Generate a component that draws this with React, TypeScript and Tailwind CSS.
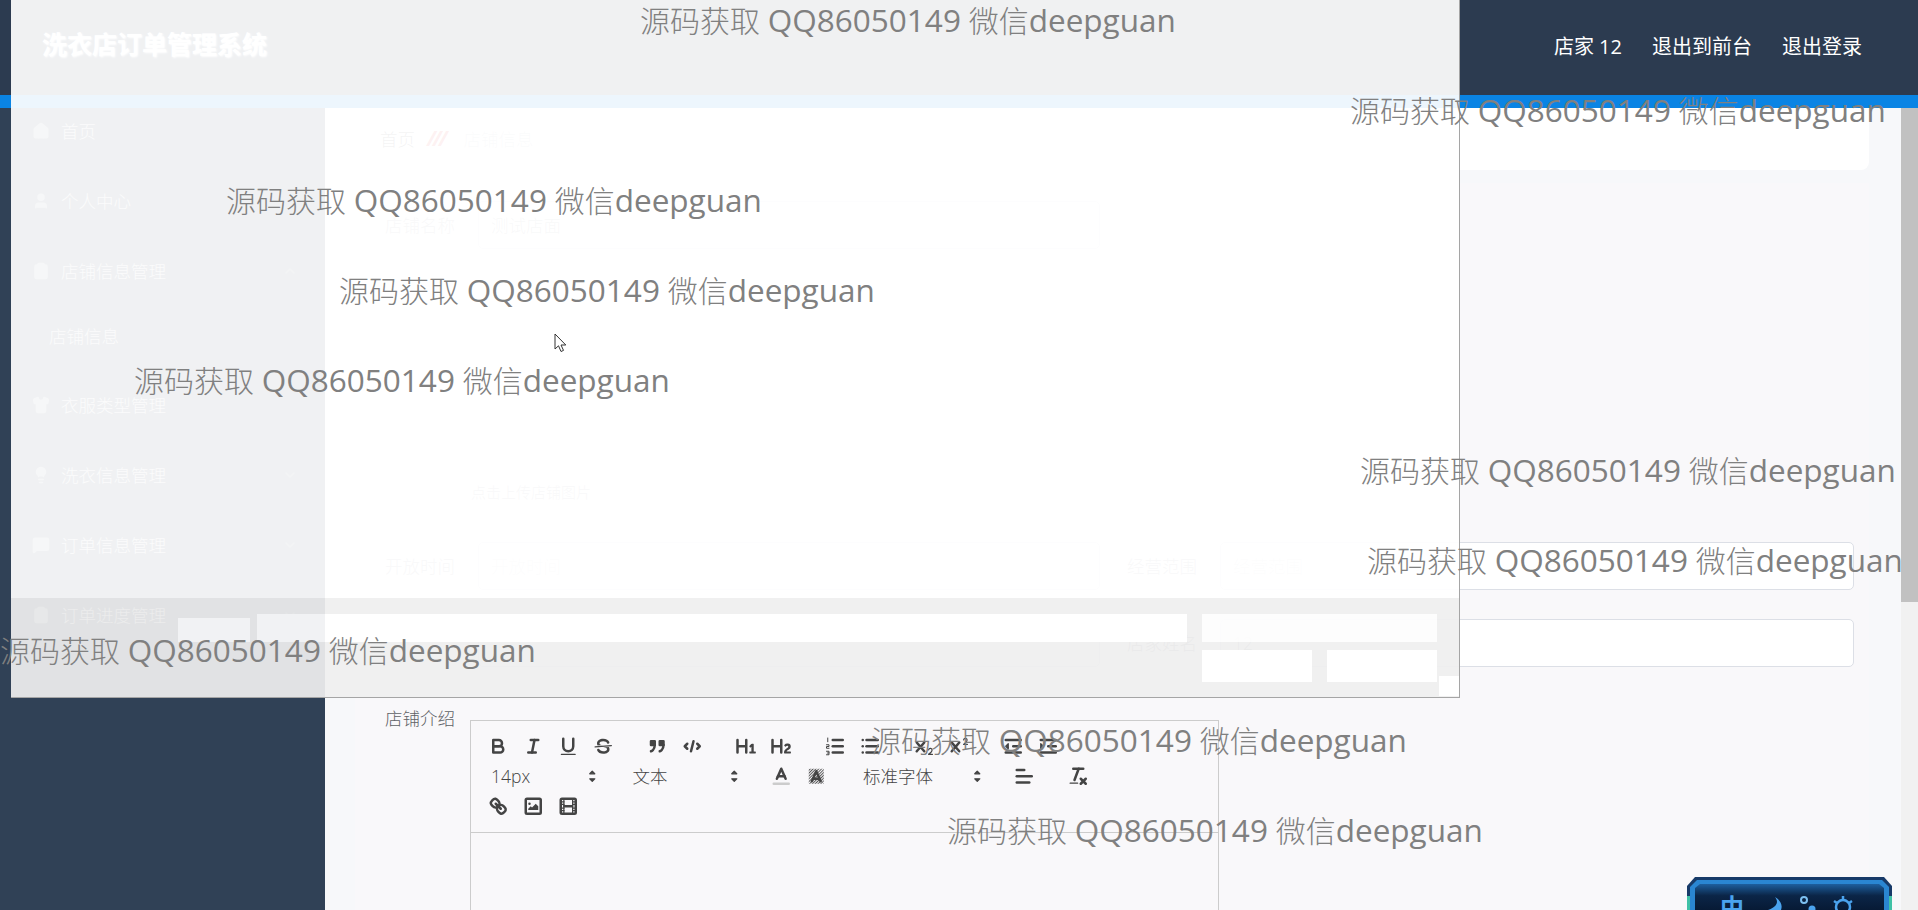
import { useId, type ReactNode } from 'react';
import { ChevronDown, ChevronUp, Clipboard, ClipboardList, House, Lightbulb, MessageSquare, Shirt, User } from 'lucide-react';

const watermarks = [
  'left-[640px] top-0',
  'left-[1350px] top-[90px]',
  'left-[226px] top-[180px]',
  'left-[339px] top-[270px]',
  'left-[134px] top-[360px]',
  'left-[1360px] top-[450px]',
  'left-[1367px] top-[540px]',
  'left-0 top-[630px]',
  'left-[871px] top-[720px]',
  'left-[947px] top-[810px]',
];

// bright gaps in the grey band at the foot of the overlay
const bandHoles = [
  'left-[167px] top-[20px] w-[72px] h-[24px] bg-[#f1f2f4]',
  'left-[246px] top-[16px] w-[68px] h-[28px] bg-[#f1f2f4]',
  'left-[314px] top-[16px] w-[862px] h-[28px] bg-white',
  'left-[1191px] top-[16px] w-[235px] h-[28px] bg-white/85',
  'left-[1191px] top-[52px] w-[110px] h-[32px] bg-white',
  'left-[1316px] top-[52px] w-[110px] h-[32px] bg-white',
  'left-[1428px] top-[78px] w-[20px] h-[20px] bg-white',
];

function Menu({ icon: Icon, label, arrow }: { icon: typeof House; label: string; arrow?: 'up' | 'down' }) {
  return (
    <div className="flex h-[46px] items-center pl-[32px] pr-[27px] text-[17.5px] font-light text-white/70">
      <Icon className="h-[18px] w-[18px] fill-white stroke-white opacity-40" />
      <span className="ml-[11px] flex-1">{label}</span>
      {arrow === 'up' && <ChevronUp className="h-4 w-4 opacity-30" />}
      {arrow === 'down' && <ChevronDown className="h-4 w-4 opacity-30" />}
    </div>
  );
}

function Qicon({ children }: { children: ReactNode }) {
  return (
    <button className="flex h-[30px] w-[35px] items-center justify-center">
      <svg
        viewBox="0 0 18 18"
        className="h-[22.5px] w-[22.5px] fill-none stroke-[#444] stroke-2"
        strokeLinecap="round"
        strokeLinejoin="round"
      >
        {children}
      </svg>
    </button>
  );
}

function Picker({ label, width }: { label: string; width: string }) {
  return (
    <div className={`flex h-[30px] items-center justify-between pl-[10px] ${width}`}>
      <span className="text-[17.5px] font-light text-[#444]">{label}</span>
      <svg viewBox="0 0 18 18" className="h-[22.5px] w-[22.5px] fill-[#444] stroke-[#444]" strokeLinejoin="round">
        <polygon points="7 11 9 13 11 11 7 11" />
        <polygon points="7 7 9 5 11 7 7 7" />
      </svg>
    </div>
  );
}

const F = 'fill-[#444] stroke-none';

function Toolbar() {
  const hatch = useId();
  return (
    <div className="h-[112px] border-b border-[#ccc] pl-[10px] pt-[10px]">
      <div className="flex h-[30px]">
        <div className="mr-[19px] flex">
          <Qicon>
            <path d="M5,4H9.5A2.5,2.5,0,0,1,12,6.5v0A2.5,2.5,0,0,1,9.5,9H5V4Z" />
            <path d="M5,9h5.5A2.5,2.5,0,0,1,13,11.5v0A2.5,2.5,0,0,1,10.5,14H5V9Z" />
          </Qicon>
          <Qicon>
            <line x1="7" x2="13" y1="4" y2="4" />
            <line x1="5" x2="11" y1="14" y2="14" />
            <line x1="8" x2="10" y1="14" y2="4" />
          </Qicon>
          <Qicon>
            <path d="M5,3V9a4.012,4.012,0,0,0,4,4H9a4.012,4.012,0,0,0,4-4V3" />
            <rect className={F} x="3" y="15" width="12" height="1" rx="0.5" />
          </Qicon>
          <Qicon>
            <line className="stroke-1" x1="15.5" x2="2.5" y1="8.5" y2="9.5" />
            <path className={F} d="M9.007,8C6.542,7.791,6,7.519,6,6.5,6,5.792,7.283,5,9,5c1.571,0,2.765.679,2.969,1.309a1,1,0,0,0,1.9-.617C13.356,4.106,11.354,3,9,3,6.2,3,4,4.538,4,6.5a3.2,3.2,0,0,0,.5,1.843Z" />
            <path className={F} d="M8.984,10C11.457,10.208,12,10.479,12,11.5c0,0.708-1.283,1.5-3,1.5-1.571,0-2.765-.679-2.969-1.309a1,1,0,1,0-1.9.617C4.644,13.894,6.646,15,9,15c2.8,0,5-1.538,5-3.5a3.2,3.2,0,0,0-.5-1.843Z" />
          </Qicon>
        </div>
        <div className="mr-[19px] flex">
          <Qicon>
            <rect className="fill-[#444]" x="4" y="5" width="3" height="3" />
            <rect className="fill-[#444]" x="11" y="5" width="3" height="3" />
            <path d="M7,8c0,4.031-3,5-3,5" />
            <path d="M14,8c0,4.031-3,5-3,5" />
          </Qicon>
          <Qicon>
            <polyline points="5 7 3 9 5 11" />
            <polyline points="13 7 15 9 13 11" />
            <line x1="10" x2="8" y1="5" y2="13" />
          </Qicon>
        </div>
        <div className="mr-[19px] flex">
          <Qicon>
            <path className={F} d="M10,4V14a1,1,0,0,1-2,0V10H3v4a1,1,0,0,1-2,0V4A1,1,0,0,1,3,4V8H8V4a1,1,0,0,1,2,0Zm6.06787,9.209H14.98975V7.59863a.54085.54085,0,0,0-.605-.60547h-.62744a1.01119,1.01119,0,0,0-.748.29688L11.645,8.56641a.5435.5435,0,0,0-.022.8584l.28613.30762a.53861.53861,0,0,0,.84717.0332l.09912-.08789a1.2137,1.2137,0,0,0,.2417-.35254h.02246s-.01123.30859-.01123.60547V13.209H12.041a.54085.54085,0,0,0-.605.60547v.43945a.54085.54085,0,0,0,.605.60547h4.02686a.54085.54085,0,0,0,.605-.60547v-.43945A.54085.54085,0,0,0,16.06787,13.209Z" />
          </Qicon>
          <Qicon>
            <path className={F} d="M16.73975,13.81445v.43945a.54085.54085,0,0,1-.605.60547H11.855a.58392.58392,0,0,1-.64893-.60547V14.0127c0-2.90527,3.39941-3.42187,3.39941-4.55469a.77675.77675,0,0,0-.84717-.78125,1.17684,1.17684,0,0,0-.83594.38477c-.2749.26367-.561.374-.85791.13184l-.4292-.34082c-.30811-.24219-.38525-.51758-.1543-.81445a2.97155,2.97155,0,0,1,2.45361-1.17676,2.45393,2.45393,0,0,1,2.68408,2.40918c0,2.45312-3.1792,2.92676-3.27832,3.93848h2.79443A.54085.54085,0,0,1,16.73975,13.81445ZM9,3A.99974.99974,0,0,0,8,4V8H3V4A1,1,0,0,0,1,4V14a1,1,0,0,0,2,0V10H8v4a1,1,0,0,0,2,0V4A.99974.99974,0,0,0,9,3Z" />
          </Qicon>
        </div>
        <div className="mr-[19px] flex">
          <Qicon>
            <line x1="7" x2="15" y1="4" y2="4" />
            <line x1="7" x2="15" y1="9" y2="9" />
            <line x1="7" x2="15" y1="14" y2="14" />
            <path className="stroke-[0.8]" d="M3,2.4 V5.4 M2,7.8 H4 V9.2 H2 V10.6 H4 M2,13 H4 V14.4 H2.6 M4,14.4 V15.8 H2" />
          </Qicon>
          <Qicon>
            <line x1="6" x2="15" y1="4" y2="4" />
            <line x1="6" x2="15" y1="9" y2="9" />
            <line x1="6" x2="15" y1="14" y2="14" />
            <line x1="3" x2="3" y1="4" y2="4" />
            <line x1="3" x2="3" y1="9" y2="9" />
            <line x1="3" x2="3" y1="14" y2="14" />
          </Qicon>
        </div>
        <div className="mr-[19px] flex">
          <Qicon>
            <path className={F} d="M15.5,15H13.861a3.858,3.858,0,0,0,1.914-2.975,1.8,1.8,0,0,0-1.6-1.751A1.921,1.921,0,0,0,12.021,11.7a0.50013,0.50013,0,1,0,.957.291h0a0.914,0.914,0,0,1,1.053-.725,0.81,0.81,0,0,1,.744.762c0,1.076-1.16971,1.86982-1.93971,2.43082A1.45639,1.45639,0,0,0,12,15.5a0.5,0.5,0,0,0,.5.5h3A0.5,0.5,0,0,0,15.5,15Z" />
            <path className={F} d="M9.65,5.241a1,1,0,0,0-1.409.108L6,7.964,3.759,5.349A1,1,0,0,0,2.192,6.59178Q2.21541,6.6213,2.241,6.649L4.684,9.5,2.241,12.35A1,1,0,0,0,3.71,13.70722q0.02557-.02768.049-0.05722L6,11.036,8.241,13.65a1,1,0,1,0,1.567-1.24277Q9.78459,12.3777,9.759,12.35L7.316,9.5,9.759,6.651A1,1,0,0,0,9.65,5.241Z" />
          </Qicon>
          <Qicon>
            <path className={F} d="M15.5,7H13.861a4.015,4.015,0,0,0,1.914-2.975,1.8,1.8,0,0,0-1.6-1.751A1.922,1.922,0,0,0,12.021,3.7a0.5,0.5,0,1,0,.957.291,0.917,0.917,0,0,1,1.053-.725,0.81,0.81,0,0,1,.744.762c0,1.077-1.164,1.925-1.934,2.486A1.423,1.423,0,0,0,12,7.5a0.5,0.5,0,0,0,.5.5h3A0.5,0.5,0,0,0,15.5,7Z" />
            <path className={F} d="M9.651,5.241a1,1,0,0,0-1.41.108L6,7.964,3.759,5.349a1,1,0,1,0-1.519,1.3L4.683,9.5,2.241,12.35a1,1,0,1,0,1.519,1.3L6,11.036,8.241,13.65a1,1,0,0,0,1.519-1.3L7.317,9.5,9.759,6.651A1,1,0,0,0,9.651,5.241Z" />
          </Qicon>
        </div>
        <div className="flex">
          <Qicon>
            <line x1="3" x2="15" y1="14" y2="14" />
            <line x1="3" x2="15" y1="4" y2="4" />
            <line x1="9" x2="15" y1="9" y2="9" />
            <polygon className="fill-[#444] stroke-1" points="5 7 5 11 3 9 5 7" />
          </Qicon>
          <Qicon>
            <line x1="3" x2="15" y1="14" y2="14" />
            <line x1="3" x2="15" y1="4" y2="4" />
            <line x1="9" x2="15" y1="9" y2="9" />
            <polygon className="fill-[#444] stroke-1" points="3 7 3 11 5 9 3 7" />
          </Qicon>
        </div>
      </div>
      <div className="flex h-[30px]">
        <Picker label="14px" width="mr-[19px] w-[122.5px]" />
        <Picker label="文本" width="mr-[19px] w-[122.5px]" />
        <div className="mr-[19px] flex">
          <Qicon>
            <line className="stroke-[#ccc]" x1="3" x2="15" y1="15" y2="15" />
            <polyline points="5.5 11 9 3 12.5 11" />
            <line x1="11.63" x2="6.38" y1="9" y2="9" />
          </Qicon>
          <Qicon>
            <defs>
              <pattern id={hatch} width="1.6" height="1.6" patternUnits="userSpaceOnUse" patternTransform="rotate(45)">
                <rect x="0" y="0" width="0.7" height="1.6" fill="#444" stroke="none" />
              </pattern>
            </defs>
            <rect className="stroke-none" x="3" y="3" width="12" height="12" fill={`url(#${hatch})`} />
            <polyline points="5.5 13 9 5 12.5 13" />
            <line x1="11.63" x2="6.38" y1="11" y2="11" />
          </Qicon>
        </div>
        <Picker label="标准字体" width="mr-[19px] w-[135px]" />
        <div className="mr-[19px] flex">
          <Qicon>
            <line x1="3" x2="15" y1="9" y2="9" />
            <line x1="3" x2="13" y1="14" y2="14" />
            <line x1="3" x2="9" y1="4" y2="4" />
          </Qicon>
        </div>
        <Qicon>
          <line x1="5" x2="13" y1="3" y2="3" />
          <line x1="6" x2="9.35" y1="12" y2="3" />
          <line x1="11" x2="15" y1="11" y2="15" />
          <line x1="15" x2="11" y1="11" y2="15" />
          <rect className={F} x="2" y="14" width="7" height="1" rx="0.5" />
        </Qicon>
      </div>
      <div className="flex h-[30px]">
        <Qicon>
          <line x1="7" x2="11" y1="7" y2="11" />
          <path d="M8.9,4.577a3.476,3.476,0,0,1,.36,4.679A3.476,3.476,0,0,1,4.577,8.9C3.185,7.5,2.035,6.4,4.217,4.217S7.5,3.185,8.9,4.577Z" />
          <path d="M13.423,9.1a3.476,3.476,0,0,0-4.679-.36,3.476,3.476,0,0,0,.36,4.679c1.392,1.392,2.5,2.542,4.679.36S14.815,10.5,13.423,9.1Z" />
        </Qicon>
        <Qicon>
          <rect x="3" y="3" width="12" height="12" rx="1" />
          <circle className={F} cx="6" cy="7" r="1" />
          <polyline className={F} points="5 12 5 11 7 9 8 10 11 7 13 9 13 12 5 12" />
        </Qicon>
        <Qicon>
          <rect x="3" y="3" width="12" height="12" rx="1" />
          <rect className={F} x="5" y="3" width="1" height="12" />
          <rect className={F} x="12" y="3" width="1" height="12" />
          <rect className={F} x="5" y="8" width="8" height="2" />
          <rect className={F} x="3" y="5" width="3" height="1" />
          <rect className={F} x="3" y="7" width="3" height="1" />
          <rect className={F} x="3" y="10" width="3" height="1" />
          <rect className={F} x="3" y="12" width="3" height="1" />
          <rect className={F} x="12" y="5" width="3" height="1" />
          <rect className={F} x="12" y="7" width="3" height="1" />
          <rect className={F} x="12" y="10" width="3" height="1" />
          <rect className={F} x="12" y="12" width="3" height="1" />
        </Qicon>
      </div>
    </div>
  );
}

function Field({ label, value, width, placeholder }: { label: string; value?: string; width: string; placeholder?: boolean }) {
  return (
    <div className={`flex items-center ${width}`}>
      <span className="w-[93px] shrink-0 text-[17.5px] font-light text-[#a0a2a8]">{label}</span>
      <div
        className={`flex h-[48px] flex-1 items-center rounded-[5px] border border-[#dcdfe6] bg-white pl-[12px] text-[17.5px] font-light ${
          placeholder ? 'text-[#d4d7dd]' : 'text-[#a0a2a8]'
        }`}
      >
        {value}
      </div>
    </div>
  );
}

function Widget() {
  return (
    <svg viewBox="0 0 205 34" className="absolute bottom-0 right-[26px] h-[34px] w-[205px]">
      <defs>
        <linearGradient id="widgetFace" x1="0" y1="0" x2="0" y2="1">
          <stop offset="0" stopColor="#1d5f9e" />
          <stop offset="0.45" stopColor="#0b2547" />
          <stop offset="1" stopColor="#071a35" />
        </linearGradient>
      </defs>
      <path d="M0,34 V10 L8,1 H197 L205,10 V34 Z" fill="#173a68" />
      <path d="M3,34 V11 L10,4 H195 L202,11 V34 Z" fill="#2a86d2" />
      <path d="M8,34 V12 L13,8 H192 L197,12 V34 Z" fill="url(#widgetFace)" />
      <rect x="0" y="20" width="3" height="14" fill="#3fc1a6" />
      <rect x="202" y="20" width="3" height="14" fill="#3fc1a6" />
      <text x="45" y="40" textAnchor="middle" fontSize="24" fontWeight="700" fill="#4aa3ee" fontFamily="'Noto Sans CJK SC', sans-serif">中</text>
      <path d="M88,21 C92,26 90,31 81,34 L94,34 C96,29 93,24 88,21 Z" fill="#4aa3ee" />
      <circle cx="117" cy="24" r="3" fill="none" stroke="#7cc0f2" strokeWidth="2" />
      <circle cx="125" cy="33" r="3.5" fill="#4aa3ee" />
      <circle cx="156" cy="31" r="7" fill="none" stroke="#4aa3ee" strokeWidth="2.5" />
      <path d="M156,20 V24 M147,25 L150,27 M165,25 L162,27" stroke="#4aa3ee" strokeWidth="2.5" />
    </svg>
  );
}

export default function App() {
  return (
    <div className="relative flex h-[910px] w-full flex-col overflow-hidden bg-[#304156] [font-family:'Open_Sans','Noto_Sans_CJK_SC',sans-serif]">
      <header className="flex h-[95px] shrink-0 items-center justify-between bg-[#2c3b50] pl-[42px] pr-[56px]">
        <h1 className="-mt-[6px] text-[25px] font-bold text-white [text-shadow:1px_1px_2px_#fff]">洗衣店订单管理系统</h1>
        <div className="-mt-[2px] flex gap-[30px] text-[20px] font-normal text-white">
          <span>店家 12</span>
          <span>退出到前台</span>
          <span>退出登录</span>
        </div>
      </header>
      <div className="h-[13px] shrink-0 bg-[#0a84e4]" />

      <div className="flex min-h-0 flex-1">
        <aside className="flex w-[325px] shrink-0 flex-col gap-[24px] bg-[#304156]">
          <Menu icon={House} label="首页" />
          <Menu icon={User} label="个人中心" />
          <div>
            <Menu icon={Clipboard} label="店铺信息管理" arrow="up" />
            <div className="mt-[20px] flex h-[44px] items-center pl-[49px] text-[17.5px] font-light text-white/70">店铺信息</div>
          </div>
          <Menu icon={Shirt} label="衣服类型管理" />
          <Menu icon={Lightbulb} label="洗衣信息管理" arrow="down" />
          <Menu icon={MessageSquare} label="订单信息管理" arrow="down" />
          <Menu icon={ClipboardList} label="订单进度管理" arrow="down" />
        </aside>

        <main className="flex min-w-0 flex-1 bg-[#f7f8fa]">
          <div className="flex min-w-0 flex-1 flex-col pl-[30px] pr-[32px]">
            <div className="flex h-[62px] shrink-0 items-center rounded-b-lg bg-white pl-[25px] text-[17.5px] font-light">
              <span className="text-[#606266]">首页</span>
              <span className="ml-[12px] mr-[19px] text-[21px] font-bold italic tracking-[-3px] text-[#e2454c]">///</span>
              <span className="text-[#c0c4cc]">店铺信息</span>
            </div>
            <form className="mt-[13px] flex-1 bg-[#f9f8fa] pl-[30px] pr-[15px] pt-[18px]">
              <Field label="店铺名称" value="测试店面" width="w-[715px]" />
              <div className="mt-[29px] flex h-[235px] flex-col justify-end pb-[10px] pl-[86px] text-[15px] font-light text-[#a0a2a8]">
                点击上传店铺图片
              </div>
              <div className="mt-[29px] flex gap-[27px]">
                <Field label="开放时间" value="开放时间" width="w-[715px]" placeholder />
                <Field label="经营范围" value="经营范围" width="flex-1" placeholder />
              </div>
              <div className="mt-[29px] flex gap-[27px]">
                <Field label="" width="w-[715px]" />
                <Field label="店家姓名" value="12" width="flex-1" />
              </div>
              <div className="mt-[53px] flex">
                <span className="w-[85px] shrink-0 text-[17.5px] leading-[26px] font-light text-[#606266] -mt-[15px]">店铺介绍</span>
                <div className="h-[300px] w-[749px] border border-[#ccc]">
                  <Toolbar />
                </div>
              </div>
            </form>
          </div>
          <div className="w-[17px] shrink-0 bg-[#f1f1f1]">
            <div className="h-[494px] bg-[#c1c1c1]" />
          </div>
        </main>
      </div>

      <Widget />

      {/* captured window sitting over the page */}
      <div className="absolute left-[11px] top-0 h-[698px] w-[1449px] border-b border-r border-[#a5a5a5] bg-white/93">
        <div className="absolute bottom-0 left-0 right-0 h-[99px] bg-black/6">
          {bandHoles.map((hole) => (
            <div key={hole} className={`absolute ${hole}`} />
          ))}
        </div>
      </div>

      {watermarks.map((pos) => (
        <div
          key={pos}
          className={`absolute h-[40px] whitespace-nowrap text-[30px] leading-[40px] font-light text-[#808080] ${pos}`}
        >
          源码获取 <span className="text-[31.5px] font-normal">QQ86050149</span> 微信<span className="text-[31.5px] font-normal">deepguan</span>
        </div>
      ))}

      <svg viewBox="0 0 14 21" className="absolute left-[554px] top-[333px] h-[21px] w-[14px]">
        <path d="M1,1 V16 L4.5,12.8 L7,18.5 L9.5,17.4 L7,12 H11.8 Z" fill="#fff" stroke="#333" strokeWidth="1" />
      </svg>
    </div>
  );
}
